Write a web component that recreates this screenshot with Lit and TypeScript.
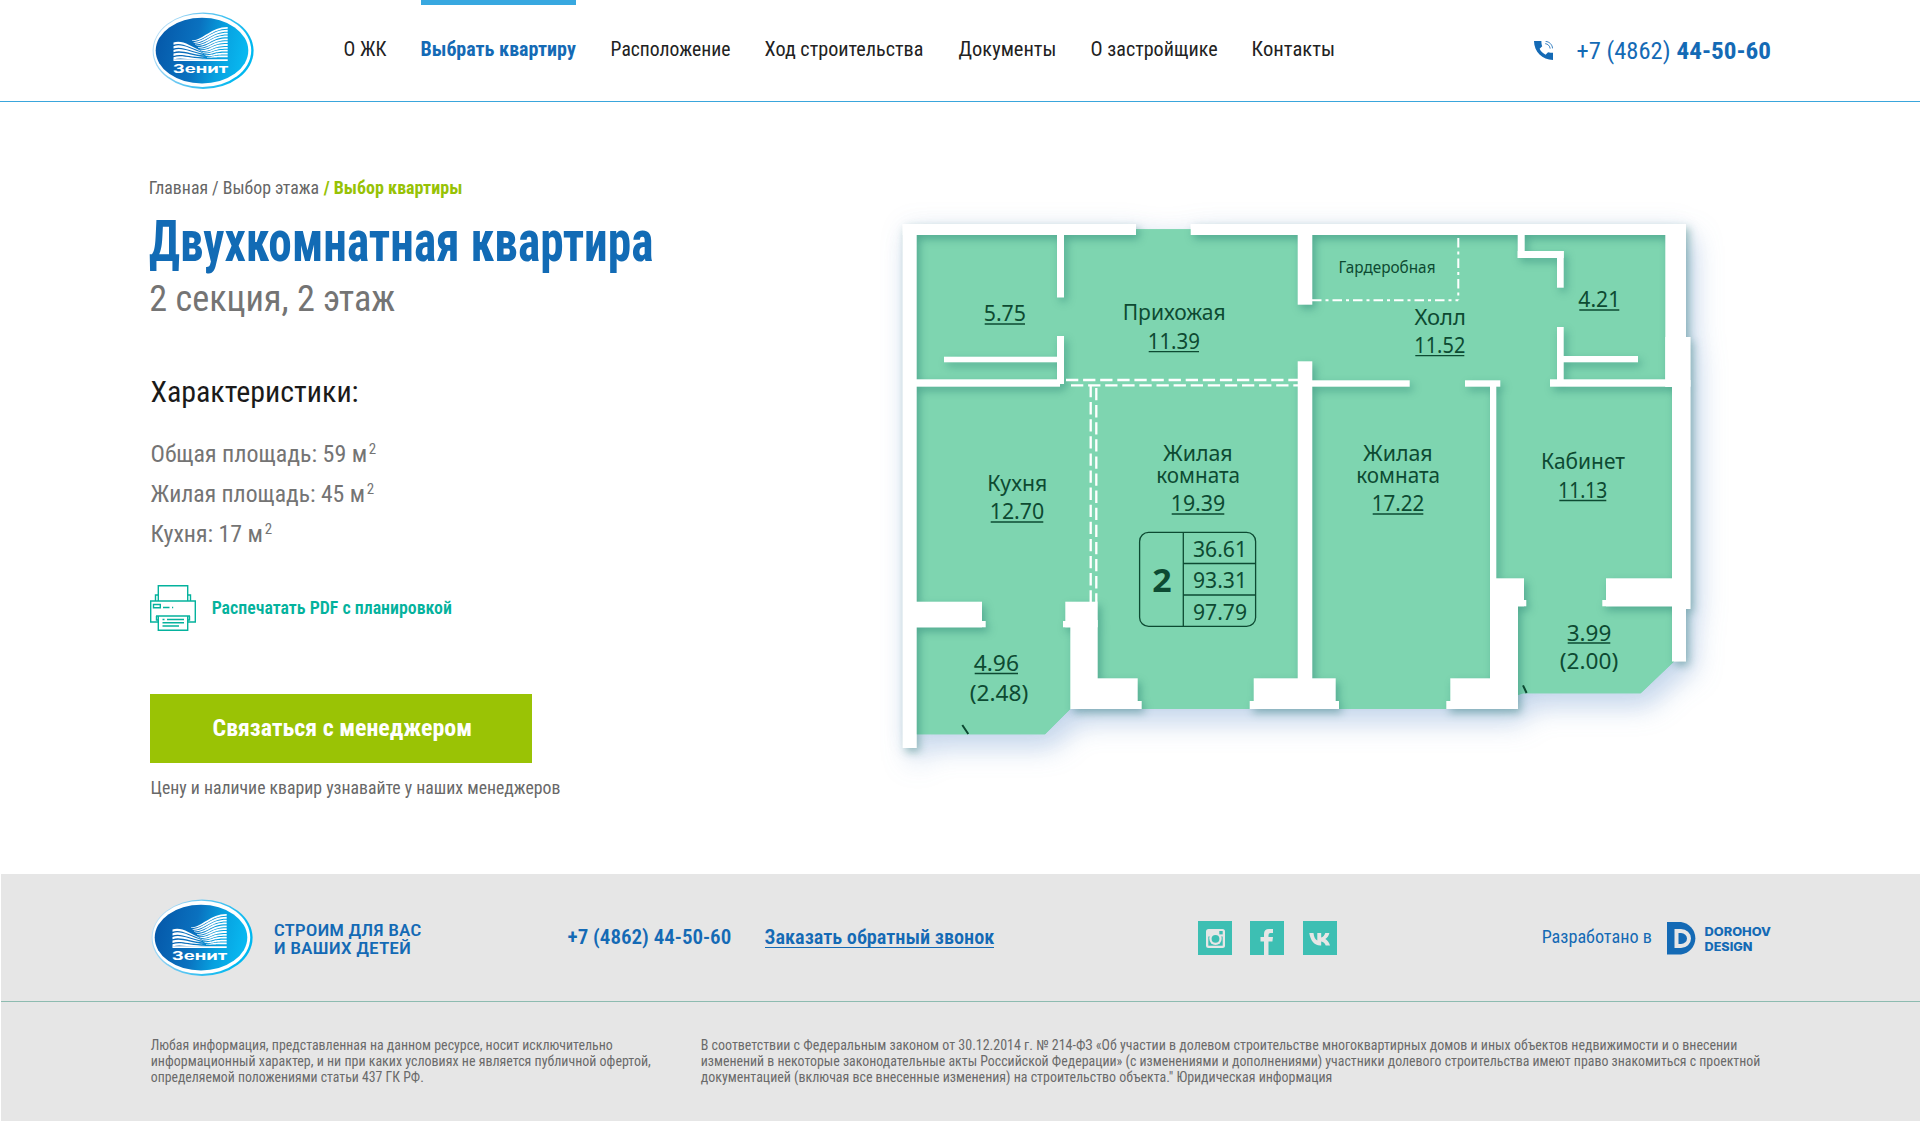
import { LitElement, html, svg, css } from "lit";
import { customElement, property } from "lit/decorators.js";

/** One line of text set to an exact measure; the glyphs are condensed to fit it. */
@customElement("fit-line")
class FitLine extends LitElement {
  @property() text = "";
  @property({ type: Number }) w = 100;
  @property({ type: Number }) size = 16;
  @property({ type: Number }) weight = 400;
  static styles = css`
    :host { display: block; flex: none; }
    .line { display: block; overflow: visible; }
    .ink { fill: currentColor; font-family: "Roboto Condensed", Roboto, sans-serif; font-stretch: 75%; }
  `;
  render() {
    const pad = this.size > 50 ? 0 : this.size * 0.02;
    return html`<svg class="line" width=${this.w} height=${this.size}>
      <text class="ink" x=${-pad} y=${Math.round(this.size * 0.86)} font-size=${this.size}
        font-weight=${this.weight} textLength=${this.w + pad * 2} lengthAdjust="spacingAndGlyphs">${this.text}</text>
    </svg>`;
  }
}

const line = (text: string, w: number, size: number, weight = 400) =>
  html`<fit-line .text=${text} .w=${w} .size=${size} .weight=${weight}></fit-line>`;

@customElement("zenit-logo")
class ZenitLogo extends LitElement {
  static styles = css`
    :host { display: block; flex: none; width: 104px; height: 80px; }
    .mark { display: block; }
    .name { font-family: Inter, "Liberation Sans", sans-serif; font-weight: 700; font-size: 12.2px; fill: #fff; }
  `;
  render() {
    // Pages taper towards the fold of the book.
    const right = Array.from({ length: 11 }, (_, i) => {
      const x = 192 + i * 1.5, y = 40.5 + i * 1.65, e = 27 + i * 2.85;
      return svg`<path d="M${x} ${y} C${x + 12} ${y - 1} 211 ${e} 227.7 ${e} V${e + 1.8} C212 ${e + 1.6} ${x + 13} ${y + 0.8} ${x} ${y + 0.6}Z"/>`;
    });
    const left = Array.from({ length: 5 }, (_, i) => {
      const y = 42.5 + i * 3.7, x = 203 + i, v = 52 + i * 1.7;
      return svg`<path d="M173.5 ${y} C182 ${y - 3} 190 ${y + 3 - i * 0.4} ${x} ${v} C190 ${y + 5.5 - i * 0.4} 182 ${y - 0.6} 173.5 ${y + 2.3}Z"/>`;
    });
    return html`<svg class="mark" width="104" height="80" viewBox="151 10 104 80">
      <defs>
        <linearGradient id="ring" x1="0" y1="0" x2="1" y2=".3">
          <stop offset="0" stop-color="#d3e6f8"/><stop offset=".45" stop-color="#6cc8f2"/><stop offset="1" stop-color="#00b8f0"/>
        </linearGradient>
        <linearGradient id="sea" x1="0" y1=".2" x2="1" y2=".35">
          <stop offset="0" stop-color="#0557a8"/><stop offset=".45" stop-color="#0a71bf"/>
          <stop offset=".72" stop-color="#07a0df"/><stop offset="1" stop-color="#08b8f0"/>
        </linearGradient>
      </defs>
      <ellipse cx="203.1" cy="50.8" rx="50.5" ry="38.2" fill="url(#ring)"/>
      <ellipse cx="202.4" cy="50.4" rx="48.8" ry="36.6" fill="#fff"/>
      <ellipse cx="202" cy="50.6" rx="46.3" ry="32.8" fill="url(#sea)"/>
      <g fill="#fff">${right}${left}</g>
      <path d="M173.5 60.2H227.7" stroke="#fff" stroke-width="1.7"/>
      <text class="name" x="172.7" y="72.7" textLength="55.5" lengthAdjust="spacingAndGlyphs">Зенит</text>
    </svg>`;
  }
}

/** Wall segments of the plan: x1, y1, x2, y2. */
const WALLS = [
  [902.7, 224, 916.7, 748], [902.7, 224, 1136, 235], [1190.7, 224, 1686, 235],
  [1665.3, 224, 1686, 387], [1665.3, 337, 1690.5, 386.7], [1672, 380, 1690.5, 609], [1672, 600, 1686, 661.5],
  [1057, 230, 1064, 297.5], [1057, 336, 1064, 384], [944, 356.7, 1060, 362.3], [910, 379.3, 1060, 386.7],
  [1297.7, 230, 1312.3, 304.7], [1297.7, 361.3, 1312.3, 690], [1253.7, 678.3, 1335.7, 709], [1249.7, 701, 1339, 709],
  [1310, 380.3, 1409.7, 386.7], [1465, 380.3, 1500.3, 386.7], [1490, 384, 1496.3, 690], [1550, 379.3, 1675, 386.7],
  [1557, 327, 1563.7, 382], [1560, 356, 1638, 362.3],
  [1517.7, 230, 1524.7, 258], [1517.7, 251, 1563.7, 258], [1557, 251, 1563.7, 287.7],
  [1490, 578.3, 1524, 606.3], [1490, 600, 1526.3, 606.3], [1490, 600, 1518, 709], [1450.3, 678.3, 1518, 709], [1446.3, 701, 1518, 709],
  [1606, 578.3, 1680, 606.3], [1602.3, 600, 1680, 606.3],
  [910, 601.7, 982, 627.3], [910, 621, 985.7, 627.3],
  [1065.3, 601.7, 1097.7, 627.3], [1063, 621, 1090, 627.3], [1070.3, 620, 1097.7, 709], [1090, 678.3, 1137.7, 709], [1090, 701, 1141.7, 709],
];

/** One line of a label: text, x1, x2, baseline, underline y (0 for none). */
type Part = [string, number, number, number, number];
const LABELS: Part[][] = [
  [["5.75", 984.7, 1025, 320.7, 324]],
  [["Прихожая", 1123.7, 1224.7, 320, 0], ["11.39", 1148.7, 1199, 348.7, 351.7]],
  [["Жилая", 1164.3, 1231.7, 461.3, 0], ["комната", 1157.3, 1239, 483.3, 0], ["19.39", 1171.7, 1224.3, 511.3, 514]],
  [["Кухня", 988.3, 1046.3, 491, 0], ["12.70", 990.7, 1043.3, 519.3, 522]],
  [["Холл", 1415.5, 1465, 324.7, 0], ["11.52", 1415.3, 1464.3, 353.3, 355.7]],
  [["4.21", 1579.3, 1619.3, 307.3, 310]],
  [["Жилая", 1364.3, 1431.7, 461.3, 0], ["комната", 1357.3, 1439, 483.3, 0], ["17.22", 1372.7, 1423.3, 511.3, 514]],
  [["Кабинет", 1542, 1624, 469.3, 0], ["11.13", 1559.3, 1606.3, 498, 500.5]],
  [["4.96", 974.7, 1018, 670.7, 673.5], ["(2.48)", 970.7, 1027.3, 700.7, 0]],
  [["3.99", 1567.7, 1610.3, 640.7, 643], ["(2.00)", 1560.8, 1617.3, 669.3, 0]],
  [["36.61", 1194, 1246, 557.3, 0]], [["93.31", 1194, 1246, 588.3, 0]], [["97.79", 1194, 1246, 619.7, 0]],
];

@customElement("floor-plan")
class FloorPlan extends LitElement {
  static styles = css`
    :host { display: block; flex: none; }
    .plan { display: block; overflow: visible; }
    .floor { fill: #7ed5b0; }
    .outer { filter: drop-shadow(8px 13px 14px rgba(70, 125, 195, 0.3)) drop-shadow(0 0 12px rgba(90, 120, 170, 0.07)); }
    .walls { fill: #fff; filter: drop-shadow(3px 4px 4px rgba(10, 100, 95, 0.38)); }
    .dash { stroke: #fff; stroke-width: 2.3; fill: none; stroke-dasharray: 12.3 4.8; }
    .dot { stroke: #fff; stroke-width: 2; fill: none; stroke-dasharray: 9.5 4 3 4; }
    .ink { fill: #0d4a32; font-family: "Noto Sans", sans-serif; font-size: 21.8px; }
    .small { font-size: 16.8px; }
    .count { font-size: 32.5px; font-weight: 700; }
    .rule { stroke: #0d4a32; fill: none; stroke-width: 1.3; }
    .tick { stroke-width: 2; }
  `;
  render() {
    const walls = () => WALLS.map(([a, b, c, d]) => svg`<rect x=${a} y=${b} width=${c - a} height=${d - b}/>`);
    const floor = "M912 229.3H1674V661.5L1640.7 693.3H1523L1518 695V709H1070.3L1045 734.3H912Z";
    return html`<svg class="plan" width="840" height="590" viewBox="880 200 840 590">
      <g class="outer"><path class="floor" d=${floor}/><g fill="#fff">${walls()}</g></g>
      <path class="floor" d=${floor}/>
      <g class="walls">${walls()}</g>
      <path class="dash" d="M1066 380H1298M1071 385.3H1298"/>
      <path class="dash" d="M1090.7 385V602M1096.3 388V602"/>
      <path class="dot" d="M1312 300.3H1458.3M1458.3 238V300"/>
      ${LABELS.map((parts) => svg`
        <text class="ink">${parts.map(([t, a, b, y]) => svg`<tspan x=${a - 1} y=${y} textLength=${b - a + 2} lengthAdjust="spacingAndGlyphs">${t}</tspan>`)}</text>
        ${parts.map(([, a, b, , u]) => (u ? svg`<path class="rule" d="M${a} ${u}H${b}"/>` : ""))}`)}
      <text class="ink small" x="1338.5" y="273.3" textLength="97" lengthAdjust="spacingAndGlyphs">Гардеробная</text>
      <text class="ink count" x="1152.3" y="591.7" textLength="19.4" lengthAdjust="spacingAndGlyphs">2</text>
      <rect class="rule" x="1139.6" y="532.4" width="116" height="94" rx="9"/>
      <path class="rule" d="M1183.3 532.4V626.4M1183.3 563.5H1255.6M1183.3 595H1255.6"/>
      <path class="rule tick" d="M962.3 725L968.3 734M1523 685.3L1526.6 693"/>
    </svg>`;
  }
}

@customElement("app-root")
class AppRoot extends LitElement {
  static styles = css`
    :host { display: block; width: 1920px; height: 1121px; background: #fff; overflow: hidden; }
    .row { display: flex; align-items: flex-start; }
    .header { height: 101px; border-bottom: 1px solid #3aa6dc; padding-left: 151px; }
    .header zenit-logo { margin-top: 10px; }
    .nav { display: flex; gap: 35.3px; margin-left: 89px; color: #222; }
    .link { border-top: 5px solid transparent; padding-top: 34px; height: 62px; }
    .active { border-top-color: #38a8e0; color: #146ab5; }
    .call { display: flex; margin-left: 199px; color: #146ab5; }
    .call svg { margin: 41px 24.5px 0 0; }
    .call fit-line { margin-top: 38px; }
    .call fit-line + fit-line { margin-left: 6.5px; }
    .main { height: 772px; padding-left: 150px; }
    .info { width: 730px; padding-top: 77px; display: flex; flex-direction: column; align-items: flex-start; }
    .crumbs { display: flex; gap: 5px; margin-left: -0.6px; color: #666; }
    .here { color: #97c205; }
    .title { margin: 14px 0 0 -1px; color: #126bb5; }
    .sub { margin: 11px 0 0 0; color: #747474; }
    .heading { margin: 60px 0 0 1px; color: #1a1a1a; }
    .specs { margin: 35px 0 0 1px; display: flex; flex-direction: column; gap: 16px; color: #747474; }
    .spec { display: flex; gap: 2px; }
    .print { display: flex; margin-top: 40px; gap: 16px; color: #04b29d; }
    .print fit-line { margin-top: 14px; }
    .button { margin-top: 63px; width: 319.5px; height: 48px; padding: 21px 0 0 62.5px; background: #9ac305; color: #fff; }
    .note { margin: 15px 0 0 1px; color: #686868; }
    .main floor-plan { margin-top: 98px; }
    .footer { margin-left: 1px; height: 247px; background: #e6e6e6; }
    .top { height: 128px; box-sizing: border-box; padding-left: 149px; color: #146ab5; border-bottom: 1px solid #8dbbb0; }
    .top zenit-logo { margin-top: 23px; }
    .slogan { margin: 48px 0 0 19.5px; width: 147px; display: grid; gap: 2px; }
    .phone { margin: 53px 0 0 147.5px; }
    .callback { margin: 53px 0 0 34.5px; border-bottom: 1px solid #146ab5; }
    .social { display: flex; gap: 18.5px; margin: 47px 0 0 203.5px; }
    .made { display: flex; margin: 47px 0 0 205px; }
    .made .by { margin: 7px 15.5px 0 0; }
    .studio { margin: 4px 0 0 7.5px; display: grid; gap: 1px; }
    .studio svg { display: block; overflow: visible; }
    .brand { font-family: Inter, sans-serif; font-weight: 800; font-size: 11.3px; fill: #146ab5; }
    .legal { padding: 36px 0 0 149.8px; color: #6a6a6a; }
    .para { display: grid; gap: 2px; }
    .first { width: 550px; }
  `;

  render() {
    const nav: [string, number][] = [
      ["О ЖК", 42], ["Выбрать квартиру", 154.4], ["Расположение", 119], ["Ход строительства", 158],
      ["Документы", 97], ["О застройщике", 126.2], ["Контакты", 82.6],
    ];
    const specs: [string, number][] = [["Общая площадь: 59 м", 215.7], ["Жилая площадь: 45 м", 213.5], ["Кухня: 17 м", 111.5]];
    return html`
      <header class="row header">
        <zenit-logo></zenit-logo>
        <nav class="nav">
          ${nav.map(([t, w], i) => html`<a class="link ${i === 1 ? "active" : ""}">${line(t, w, 20, i === 1 ? 700 : 400)}</a>`)}
        </nav>
        <div class="call">
          <svg width="19" height="19" viewBox="3 3 18 18">
            <path fill="#146ab5" d="M3 3H10C10 5 10.3 6.7 10.8 8L8.3 10.4C9.6 13 11.5 14.8 14 16L16.3 13.6C18 14 19.5 14.2 21 14.2V21C11 21 3 13 3 3Z"/>
            <path fill="none" stroke="#146ab5" stroke-width=".8" d="M14 3.4c3.5.2 6.3 3 6.6 6.6M13.6 5.5c2.5.2 4.5 2.2 4.7 4.7"/>
          </svg>
          ${line("+7 (4862)", 93, 24)}${line("44-50-60", 93.5, 24, 700)}
        </div>
      </header>
      <main class="row main">
        <section class="info">
          <div class="crumbs">${line("Главная / Выбор этажа", 169.7, 18)}<span class="here">${line("/ Выбор квартиры", 138, 18, 700)}</span></div>
          <div class="title">${line("Двухкомнатная квартира", 504.5, 58, 700)}</div>
          <div class="sub">${line("2 секция, 2 этаж", 244.5, 36)}</div>
          <div class="heading">${line("Характеристики:", 207, 30)}</div>
          <div class="specs">
            ${specs.map(([t, w]) => html`<div class="spec">${line(t, w, 24)}${line("2", 6.8, 15)}</div>`)}
          </div>
          <a class="print">
            <svg width="46" height="46" fill="none" stroke="#04b29d" stroke-width="1.4">
              <path d="M8.3 15.5V.7H37.7V15.5M8 10H5.5V15.5M38 10H40.5V15.5M8 37H.7V16H45.3V37H38M6 31H40M6.5 31V35H8M39.5 31V35H38M8.3 31V45.3H37.7V31"/>
              <path d="M3.5 19.5H10.3V22.7H3.5ZM13 22.5H19.5M22 22.5H23.2M12.5 34.5H14.5M17 34.5H34M12.5 37.7H34M12.5 41H29"/>
            </svg>
            ${line("Распечатать PDF с планировкой", 239.5, 18, 600)}
          </a>
          <a class="button">${line("Связаться с менеджером", 258.5, 24, 700)}</a>
          <div class="note">${line("Цену и наличие кварир узнавайте у наших менеджеров", 409, 19)}</div>
        </section>
        <floor-plan></floor-plan>
      </main>
      <footer class="footer">
        <div class="row top">
          <zenit-logo></zenit-logo>
          <div class="slogan">${line("СТРОИМ ДЛЯ ВАС", 147, 16, 500)}${line("И ВАШИХ ДЕТЕЙ", 136.7, 16, 500)}</div>
          <div class="phone">${line("+7 (4862) 44-50-60", 162.8, 20, 600)}</div>
          <a class="callback">${line("Заказать обратный звонок", 229, 20, 600)}</a>
          <div class="social">
            <svg width="34" height="34"><rect width="34" height="34" fill="#3dbfb3"/>
              <rect x="8" y="8" width="19" height="19" rx="2.5" fill="#e6e6e6"/>
              <rect x="10.3" y="15.5" width="14.4" height="9.2" fill="#3dbfb3"/>
              <circle cx="17.5" cy="17.8" r="6.2" fill="#e6e6e6"/>
              <circle cx="17.5" cy="17.8" r="3.9" fill="#3dbfb3"/>
              <rect x="21.3" y="10" width="3.4" height="3.4" fill="#3dbfb3"/></svg>
            <svg width="34" height="34"><rect width="34" height="34" fill="#3dbfb3"/>
              <path fill="#e6e6e6" d="M14 34V20.5H10.5V16H14V13Q14 8 19 8H23V12H20.5Q18.5 12 18.5 14V16H23L22.4 20.5H18.5V34Z"/></svg>
            <svg width="34" height="34"><rect width="34" height="34" fill="#3dbfb3"/>
              <path fill="#e6e6e6" d="M17.3 24.5C11 24.5 7.5 19.5 6.3 12H10.5C10.9 16 12.3 18.5 14.3 19.5V12H18.2V16.5C20 16 21.6 14.3 22.3 12H26.4C25.8 14.8 24 17 22.3 18C24.2 19 26.2 21.2 27 24.5H22.7C22 22.5 20.3 21 18.2 20.6V24.5Z"/></svg>
          </div>
          <div class="made">
            <div class="by">${line("Разработано в", 109.5, 18)}</div>
            <svg width="31" height="34" viewBox="0 0 31 34">
              <path fill="#146ab5" d="M0 1H14A17 16.5 0 0 1 14 33.6H0Z"/>
              <path fill="none" stroke="#e6e6e6" stroke-width="4" d="M7.5 10H14A8 7.5 0 0 1 14 25H7.5M9.5 9V26"/>
            </svg>
            <div class="studio">
              <svg width="66" height="12"><text class="brand" x="-.5" y="11" textLength="66.5" lengthAdjust="spacingAndGlyphs">DOROHOV</text></svg>
              <svg width="66" height="12"><text class="brand" x="-.5" y="10" textLength="48" lengthAdjust="spacingAndGlyphs">DESIGN</text></svg>
            </div>
          </div>
        </div>
        <div class="row legal">
          <div class="para first">
            ${line("Любая информация, представленная на данном ресурсе, носит исключительно", 461.5, 14)}
            ${line("информационный характер, и ни при каких условиях не является публичной офертой,", 499.5, 14)}
            ${line("определяемой положениями статьи 437 ГК РФ.", 272.5, 14)}
          </div>
          <div class="para">
            ${line("В соответствии с Федеральным законом от 30.12.2014 г. № 214-ФЗ «Об участии в долевом строительстве многоквартирных домов и иных объектов недвижимости и о внесении", 1036, 14)}
            ${line("изменений в некоторые законодательные акты Российской Федерации» (с изменениями и дополнениями) участники долевого строительства имеют право знакомиться с проектной", 1059, 14)}
            ${line("документацией (включая все внесенные изменения) на строительство объекта.\" Юридическая информация", 631, 14)}
          </div>
        </div>
      </footer>
    `;
  }
}
